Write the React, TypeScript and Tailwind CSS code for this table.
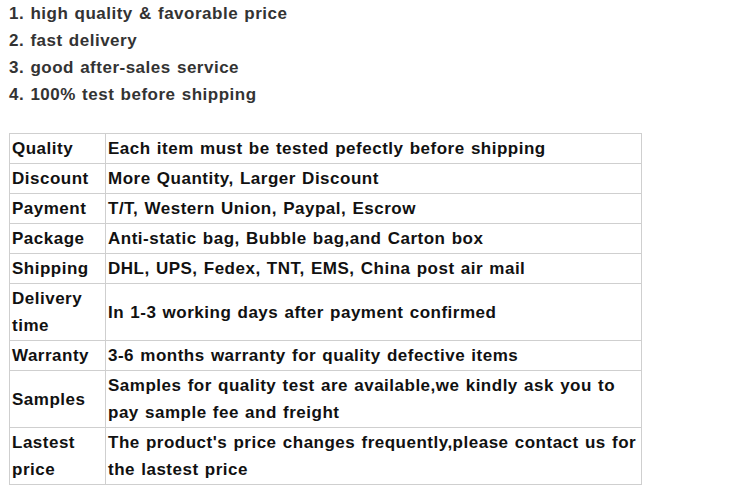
const points = [
  "1. high quality & favorable price",
  "2. fast delivery",
  "3. good after-sales service",
  "4. 100% test before shipping",
];

const rows: [string, string][] = [
  ["Quality", "Each item must be tested pefectly before shipping"],
  ["Discount", "More Quantity, Larger Discount"],
  ["Payment", "T/T, Western Union, Paypal, Escrow"],
  ["Package", "Anti-static bag, Bubble bag,and Carton box"],
  ["Shipping", "DHL, UPS, Fedex, TNT, EMS, China post air mail"],
  ["Delivery time", "In 1-3 working days after payment confirmed"],
  ["Warranty", "3-6 months warranty for quality defective items"],
  ["Samples", "Samples for quality test are available,we kindly ask you to pay sample fee and freight"],
  ["Lastest price", "The product's price changes frequently,please contact us for the lastest price"],
];

const App = () => {
  return (
    <div className="w-[738px] h-[489px] bg-white font-['Liberation_Sans',Arial,sans-serif] font-bold text-[17px] leading-[27px] tracking-[0.5px] [word-spacing:1px]">
      <div className="pl-[9px] text-[#333]">
        {points.map((p) => (
          <p key={p}>{p}</p>
        ))}
      </div>
      <table className="mt-[25px] ml-[9px] w-[633px] border-collapse text-[#111]">
        <tbody>
          {rows.map(([label, value]) => (
            <tr key={label}>
              <td className="w-[96px] border border-[#cfcfcf] px-[2px] py-[1px] align-middle">{label}</td>
              <td className="border border-[#cfcfcf] px-[2px] py-[1px] align-middle">{value}</td>
            </tr>
          ))}
        </tbody>
      </table>
    </div>
  );
};

export default App;
